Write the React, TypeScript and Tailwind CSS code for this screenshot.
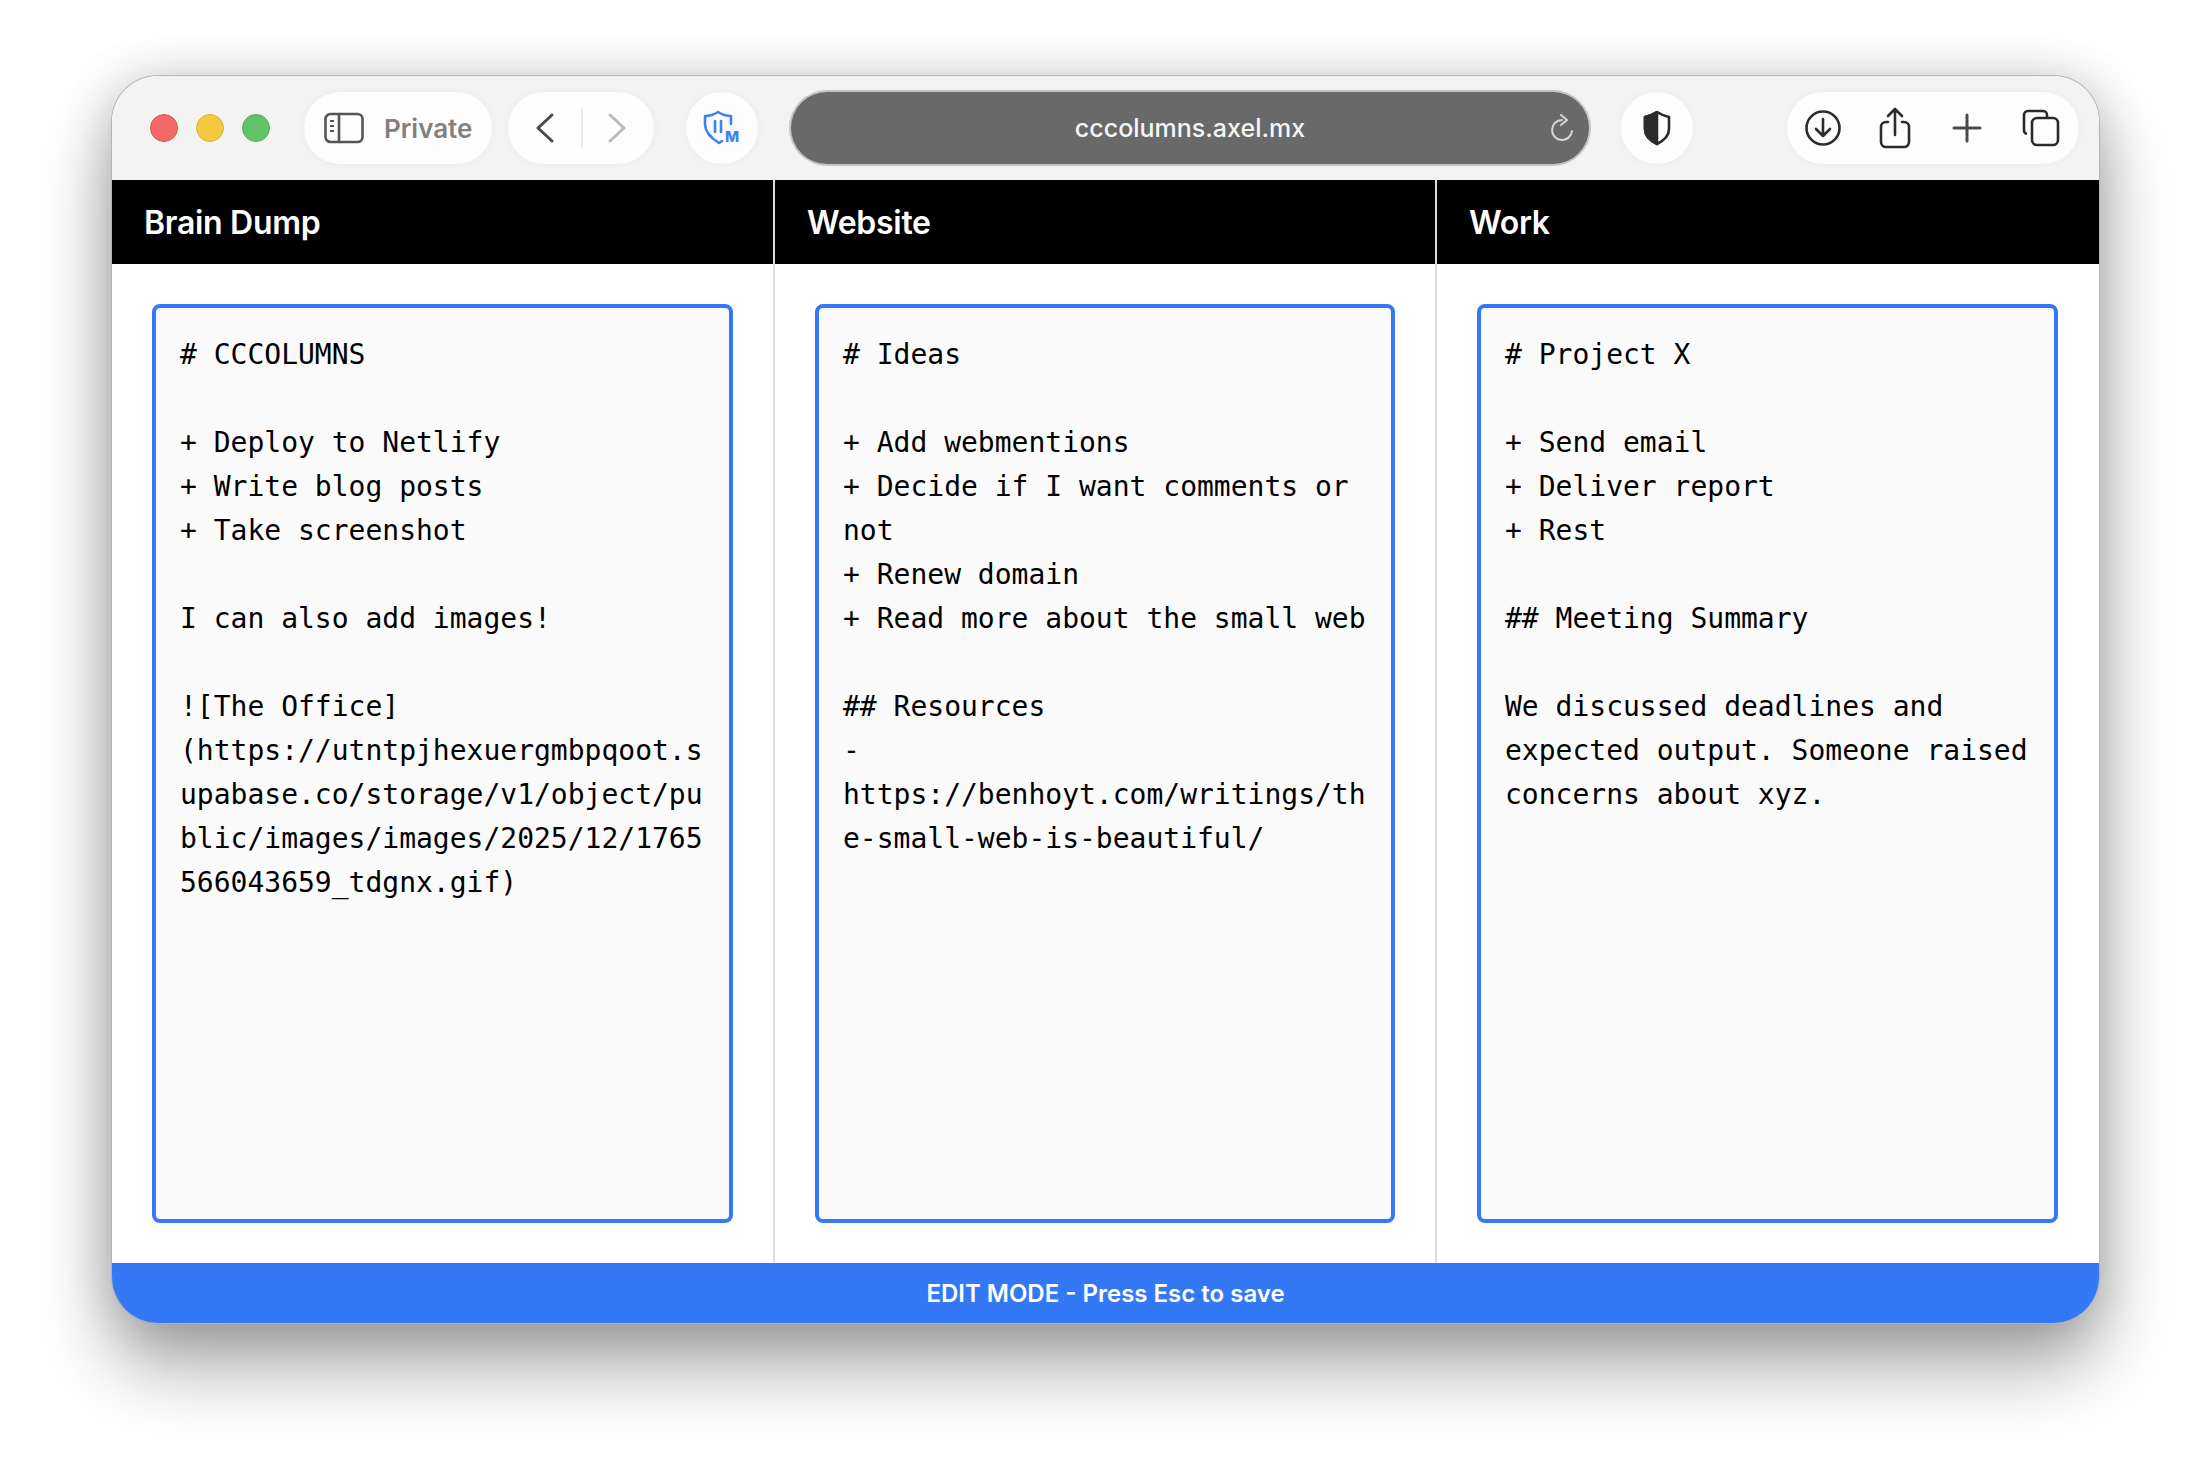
const columns = [
  {
    title: 'Brain Dump',
    text: `# CCCOLUMNS

+ Deploy to Netlify
+ Write blog posts
+ Take screenshot

I can also add images!

![The Office]
(https://utntpjhexuergmbpqoot.supabase.co/storage/v1/object/public/images/images/2025/12/1765566043659_tdgnx.gif)`,
  },
  {
    title: 'Website',
    text: `# Ideas

+ Add webmentions
+ Decide if I want comments or not
+ Renew domain
+ Read more about the small web

## Resources
-
https://benhoyt.com/writings/the-small-web-is-beautiful/`,
  },
  {
    title: 'Work',
    text: `# Project X

+ Send email
+ Deliver report
+ Rest

## Meeting Summary

We discussed deadlines and expected output. Someone raised concerns about xyz.`,
  },
];

const Pill = ({ className, children }: { className: string; children: React.ReactNode }) => (
  <div className={`flex h-[72px] shrink-0 items-center rounded-[36px] bg-[#fdfdfd] shadow-[0_0_10px_rgba(0,0,0,0.04)] ${className}`}>
    {children}
  </div>
);

const App = () => {
  return (
    <div className="h-[1472px] w-[2212px] overflow-hidden bg-white pl-[112px] pt-[76px] font-['Inter',sans-serif]">
      <div className="flex h-[1247px] w-[1987px] flex-col overflow-hidden rounded-[46px] shadow-[0_0_0_1px_#b4b4b4,0_42px_75px_rgba(0,0,0,0.36),0_0_50px_rgba(0,0,0,0.16)]">
        {/* Browser toolbar */}
        <div className="flex h-[104px] shrink-0 items-center bg-[#f3f3f3] pl-[38px]">
          <div className="flex gap-[18px]">
            <div className="h-[28px] w-[28px] rounded-full border border-[#e2514f] bg-[#f26a68]" />
            <div className="h-[28px] w-[28px] rounded-full border border-[#e0b234] bg-[#f5c93f]" />
            <div className="h-[28px] w-[28px] rounded-full border border-[#52ae56] bg-[#62c466]" />
          </div>

          <Pill className="ml-[34px] w-[188px] pl-[20px]">
            <svg width="40" height="32" viewBox="0 0 40 32" fill="none" stroke="#555" strokeWidth="2.6">
              <rect x="1.5" y="2" width="37" height="28" rx="5" />
              <path d="M15 2v28" />
              <path d="M6 9h4M6 14h4M6 19h4" strokeWidth="2" />
            </svg>
            <span className="ml-[20px] text-[26px] font-semibold text-[#808080]">Private</span>
          </Pill>

          <Pill className="ml-[16px] w-[146px] pl-[25px]">
            <svg width="24" height="32" viewBox="0 0 24 32" fill="none" stroke="#4a4a4a" strokeWidth="3" strokeLinecap="round" strokeLinejoin="round">
              <path d="M19 3 5 16l14 13" />
            </svg>
            <div className="ml-[24px] h-[40px] w-[2px] bg-[#ececec]" />
            <svg className="ml-[22px]" width="24" height="32" viewBox="0 0 24 32" fill="none" stroke="#b9b9b9" strokeWidth="3" strokeLinecap="round" strokeLinejoin="round">
              <path d="M5 3l14 13L5 29" />
            </svg>
          </Pill>

          <Pill className="ml-[32px] w-[72px] justify-center">
            <svg width="40" height="36" viewBox="0 0 40 36" fill="none" stroke="#3b82f6" strokeLinecap="round" strokeLinejoin="round">
              <path d="M3 6c5 0 10-2 13-4 3 2 8 4 13 4v8M3 6v8c0 8 6 14 14 19l3-2" strokeWidth="2.6" />
              <path d="M13 11v11M19 11v11" strokeWidth="2.6" />
              <text x="23" y="32" fontFamily="Inter, sans-serif" fontSize="15" fontWeight="800" fill="#3b82f6" stroke="none">M</text>
            </svg>
          </Pill>

          <div className="relative ml-[33px] flex h-[72px] w-[798px] shrink-0 items-center justify-center rounded-[36px] bg-[#696969] pt-[1px] shadow-[0_0_0_2px_#c4c4c4]">
            <span className="text-[25px] font-medium text-[#f5f5f5]">cccolumns.axel.mx</span>
            <svg className="absolute right-[12px] top-[22px]" width="28" height="28" viewBox="0 0 28 28" fill="none" stroke="#d6d6d6" strokeWidth="2" strokeLinecap="round" strokeLinejoin="round">
              <path d="M13 6a10 10 0 1 0 10 11" />
              <path d="M12 1l6 5-6 5" />
            </svg>
          </div>

          <Pill className="ml-[32px] w-[72px] justify-center">
            <svg width="30" height="36" viewBox="0 0 30 36" fill="none" stroke="#2b2b2b" strokeWidth="2.6" strokeLinejoin="round">
              <path d="M15 2c-3 2-8 4-12 5v12c0 7 6 12 12 15 6-3 12-8 12-15V7c-4-1-9-3-12-5z" />
              <path d="M15 2c-3 2-8 4-12 5v12c0 7 6 12 12 15z" fill="#2b2b2b" />
            </svg>
          </Pill>

          <Pill className="ml-[94px] w-[292px] gap-[32px] pl-[16px]">
            <svg width="40" height="40" viewBox="0 0 40 40" fill="none" stroke="#2b2b2b" strokeWidth="2.6" strokeLinecap="round" strokeLinejoin="round">
              <circle cx="20" cy="20" r="16.5" />
              <path d="M20 11v17M13 21l7 7 7-7" />
            </svg>
            <svg width="40" height="42" viewBox="0 0 40 42" fill="none" stroke="#2b2b2b" strokeWidth="2.6" strokeLinecap="round" strokeLinejoin="round">
              <path d="M13 15H11a5 5 0 0 0-5 5v15a5 5 0 0 0 5 5h18a5 5 0 0 0 5-5V20a5 5 0 0 0-5-5h-2" />
              <path d="M20 28V3M13 9l7-7 7 7" />
            </svg>
            <svg width="40" height="40" viewBox="0 0 40 40" fill="none" stroke="#4a4a4a" strokeWidth="3" strokeLinecap="round">
              <path d="M20 7v26M7 20h26" />
            </svg>
            <svg className="ml-[2px]" width="40" height="40" viewBox="0 0 40 40" fill="none" stroke="#2b2b2b" strokeWidth="2.6" strokeLinejoin="round">
              <path d="M6 26a4 4 0 0 1-3-4V7a4 4 0 0 1 4-4h15a4 4 0 0 1 4 4v2" />
              <rect x="11" y="10" width="26" height="27" rx="5" />
            </svg>
          </Pill>
        </div>

        {/* Columns */}
        <div className="grid min-h-0 flex-1 grid-cols-[663px_662px_662px] bg-white">
          {columns.map((col, i) => (
            <div key={col.title} className={`flex min-w-0 flex-col ${i < 2 ? 'border-r-2 border-[#dcdcdc]' : ''}`}>
              <div className="flex h-[84px] shrink-0 items-center bg-black pl-[32px] pt-[1px] text-[32px] font-semibold tracking-[-0.3px] text-white">
                {col.title}
              </div>
              <div className={`flex min-h-0 flex-1 flex-col p-10 ${i === 2 ? 'pr-[41px]' : ''}`}>
                <div className="flex-1 whitespace-pre-wrap break-words rounded-lg border-4 border-[#3578f6] bg-[#fafafa] px-6 pb-6 pt-[25px] font-['DejaVu_Sans_Mono',monospace] text-[28px] leading-[44px] text-black">
                  {col.text}
                </div>
              </div>
            </div>
          ))}
        </div>

        <div className="flex h-[60px] shrink-0 items-center justify-center bg-[#3578f6] pt-[1px] text-[24px] font-semibold text-white">
          EDIT MODE - Press Esc to save
        </div>
      </div>
    </div>
  );
};

export default App;
